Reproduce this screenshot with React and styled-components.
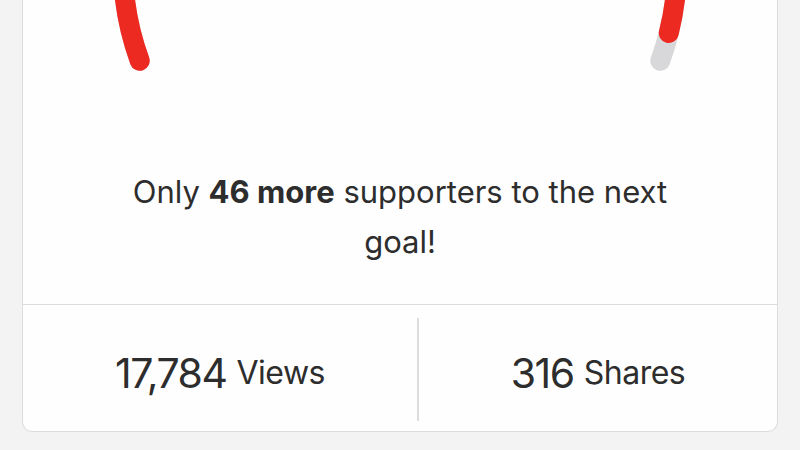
import React from "react";
import styled, { createGlobalStyle } from "styled-components";

const Global = createGlobalStyle`
  html, body { margin: 0; padding: 0; background: #f3f3f4; }
  body { font-family: Inter, "Noto Sans", sans-serif; color: #2d2d2d; }
`;

const Page = styled.div`
  width: 800px;
  height: 450px;
  padding: 0 22px;
  box-sizing: border-box;
  overflow: hidden;
`;

const Card = styled.div`
  background: #fefefe;
  border: 1px solid #dcdcde;
  border-top: none;
  border-radius: 0 0 10px 10px;
  display: flex;
  flex-direction: column;
`;

const GaugeArea = styled.div`
  height: 167px;
  display: flex;
  justify-content: center;
`;

const Message = styled.p`
  margin: 0 auto;
  width: 580px;
  text-align: center;
  font-size: 31px;
  line-height: 50px;
  letter-spacing: 0;
  color: #2d2d2d;
  padding-bottom: 37px;
  b { font-weight: 700; }
`;

const Stats = styled.div`
  border-top: 1px solid #dcdcde;
  display: grid;
  grid-template-columns: 394px 1fr;
  padding: 13px 0 10px;
`;

const Stat = styled.div`
  height: 103px;
  display: flex;
  align-items: center;
  justify-content: center;
  gap: 10px;
  border-left: ${(p) => (p.$divider ? "2px solid #dcdcde" : "none")};
  padding-top: 6px;
  box-sizing: border-box;
`;

const Num = styled.span`
  font-size: 41px;
  letter-spacing: -1.5px;
  color: #2d2d2d;
`;

const Label = styled.span`
  font-size: 32px;
  letter-spacing: -0.5px;
  color: #2d2d2d;
`;

const CX = 377;
const CY = -34;
const R = 277;
const pt = (deg) => {
  const a = (deg * Math.PI) / 180;
  return [CX + R * Math.cos(a), CY + R * Math.sin(a)];
};

function Gauge() {
  // angles in screen coords (y down): 160deg = lower-left, 20deg = lower-right
  const [lx, ly] = pt(160);
  const [rx, ry] = pt(20);
  const [ex, ey] = pt(14);
  return (
    <svg width="754" height="167" viewBox="0 0 754 167">
      <path
        d={`M ${lx} ${ly} A ${R} ${R} 0 1 1 ${rx} ${ry}`}
        fill="none"
        stroke="#d8d8da"
        strokeWidth="20"
        strokeLinecap="round"
      />
      <path
        d={`M ${lx} ${ly} A ${R} ${R} 0 1 1 ${ex} ${ey}`}
        fill="none"
        stroke="#ec2a22"
        strokeWidth="20"
        strokeLinecap="round"
      />
    </svg>
  );
}

export default function App() {
  return (
    <Page>
      <Global />
      <Card>
        <GaugeArea>
          <Gauge />
        </GaugeArea>
        <Message>
          Only <b>46 more</b> supporters to the next goal!
        </Message>
        <Stats>
          <Stat>
            <Num>17,784</Num>
            <Label>Views</Label>
          </Stat>
          <Stat $divider>
            <Num>316</Num>
            <Label>Shares</Label>
          </Stat>
        </Stats>
      </Card>
    </Page>
  );
}
